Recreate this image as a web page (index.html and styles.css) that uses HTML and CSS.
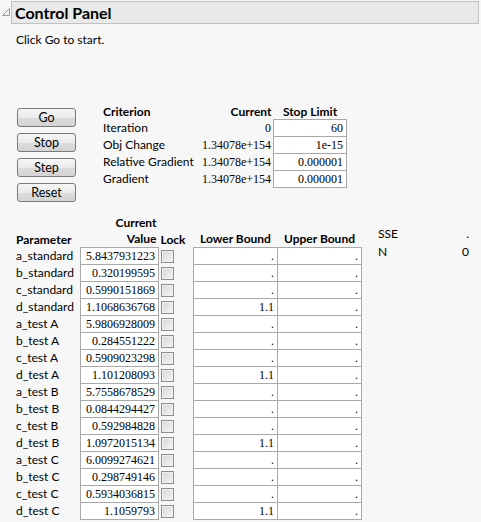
FILE: index.html
```html
<!DOCTYPE html>
<html>
<head>
<meta charset="utf-8">
<link rel="stylesheet" href="styles.css">
</head>
<body>
<div class="panel-head">
  <svg class="tri" width="10" height="10" viewBox="0 0 10 10"><path d="M8.5 1.5 L8.5 8.5 L1.5 8.5 Z" fill="#f4f4f4" stroke="#9a9a9a" stroke-width="1"/></svg>
  <div class="bar">Control Panel</div>
</div>
<div class="msg">Click Go to start.</div>

<div class="controls">
  <div class="buttons">
    <button class="btn">Go</button>
    <button class="btn">Stop</button>
    <button class="btn">Step</button>
    <button class="btn">Reset</button>
  </div>
  <table class="crit">
    <tr class="hrow"><th class="c-label">Criterion</th><th class="c-cur">Current</th><th class="c-stop">Stop Limit</th></tr>
    <tr><td class="c-label">Iteration</td><td class="c-cur num">0</td><td class="c-stop box num">60</td></tr>
    <tr><td class="c-label">Obj Change</td><td class="c-cur num">1.34078e+154</td><td class="c-stop box num">1e-15</td></tr>
    <tr><td class="c-label">Relative Gradient</td><td class="c-cur num">1.34078e+154</td><td class="c-stop box num">0.000001</td></tr>
    <tr><td class="c-label">Gradient</td><td class="c-cur num">1.34078e+154</td><td class="c-stop box num">0.000001</td></tr>
  </table>
</div>

<div class="params">
  <table class="ptab">
    <tr class="h1"><th></th><th class="p-val">Current</th><th></th><th></th><th></th></tr>
    <tr class="h2"><th class="p-name">Parameter</th><th class="p-val">Value</th><th class="p-lock">Lock</th><th class="p-bnd">Lower Bound</th><th class="p-bnd">Upper Bound</th></tr>
    <tr><td class="p-name">a_standard</td><td class="p-val box num">5.8437931223</td><td class="p-lock"><span class="chk"></span></td><td class="p-bnd box num">.</td><td class="p-bnd box num">.</td></tr>
    <tr><td class="p-name">b_standard</td><td class="p-val box num">0.320199595</td><td class="p-lock"><span class="chk"></span></td><td class="p-bnd box num">.</td><td class="p-bnd box num">.</td></tr>
    <tr><td class="p-name">c_standard</td><td class="p-val box num">0.5990151869</td><td class="p-lock"><span class="chk"></span></td><td class="p-bnd box num">.</td><td class="p-bnd box num">.</td></tr>
    <tr><td class="p-name">d_standard</td><td class="p-val box num">1.1068636768</td><td class="p-lock"><span class="chk"></span></td><td class="p-bnd box num">1.1</td><td class="p-bnd box num">.</td></tr>
    <tr><td class="p-name">a_test A</td><td class="p-val box num">5.9806928009</td><td class="p-lock"><span class="chk"></span></td><td class="p-bnd box num">.</td><td class="p-bnd box num">.</td></tr>
    <tr><td class="p-name">b_test A</td><td class="p-val box num">0.284551222</td><td class="p-lock"><span class="chk"></span></td><td class="p-bnd box num">.</td><td class="p-bnd box num">.</td></tr>
    <tr><td class="p-name">c_test A</td><td class="p-val box num">0.5909023298</td><td class="p-lock"><span class="chk"></span></td><td class="p-bnd box num">.</td><td class="p-bnd box num">.</td></tr>
    <tr><td class="p-name">d_test A</td><td class="p-val box num">1.101208093</td><td class="p-lock"><span class="chk"></span></td><td class="p-bnd box num">1.1</td><td class="p-bnd box num">.</td></tr>
    <tr><td class="p-name">a_test B</td><td class="p-val box num">5.7558678529</td><td class="p-lock"><span class="chk"></span></td><td class="p-bnd box num">.</td><td class="p-bnd box num">.</td></tr>
    <tr><td class="p-name">b_test B</td><td class="p-val box num">0.0844294427</td><td class="p-lock"><span class="chk"></span></td><td class="p-bnd box num">.</td><td class="p-bnd box num">.</td></tr>
    <tr><td class="p-name">c_test B</td><td class="p-val box num">0.592984828</td><td class="p-lock"><span class="chk"></span></td><td class="p-bnd box num">.</td><td class="p-bnd box num">.</td></tr>
    <tr><td class="p-name">d_test B</td><td class="p-val box num">1.0972015134</td><td class="p-lock"><span class="chk"></span></td><td class="p-bnd box num">1.1</td><td class="p-bnd box num">.</td></tr>
    <tr><td class="p-name">a_test C</td><td class="p-val box num">6.0099274621</td><td class="p-lock"><span class="chk"></span></td><td class="p-bnd box num">.</td><td class="p-bnd box num">.</td></tr>
    <tr><td class="p-name">b_test C</td><td class="p-val box num">0.298749146</td><td class="p-lock"><span class="chk"></span></td><td class="p-bnd box num">.</td><td class="p-bnd box num">.</td></tr>
    <tr><td class="p-name">c_test C</td><td class="p-val box num">0.5934036815</td><td class="p-lock"><span class="chk"></span></td><td class="p-bnd box num">.</td><td class="p-bnd box num">.</td></tr>
    <tr><td class="p-name">d_test C</td><td class="p-val box num">1.1059793</td><td class="p-lock"><span class="chk"></span></td><td class="p-bnd box num">1.1</td><td class="p-bnd box num">.</td></tr>
  </table>
  <div class="stats">
    <div class="s-label">SSE</div><div class="s-val">.</div>
    <div class="s-label">N</div><div class="s-val">0</div>
  </div>
</div>
</body>
</html>
```
FILE: styles.css
```css
html, body {
  margin: 0;
  padding: 0;
  background: #f7f7f7;
}
body {
  font-family: Lato, "Open Sans", sans-serif;
  font-size: 12px;
  color: #000;
  width: 481px;
  height: 522px;
  overflow: hidden;
}
.panel-head {
  display: flex;
  align-items: flex-start;
  padding-top: 1px;
}
.tri {
  margin: 6px 0 0 1px;
  flex: none;
}
.bar {
  flex: 1;
  margin-right: 2px;
  height: 21px;
  line-height: 21px;
  border: 1px solid #c2c2c2;
  background: #e9e9e9;
  font-weight: bold;
  font-size: 16px;
  padding-left: 3px;
}
.msg {
  margin: 8px 0 0 16px;
  line-height: 15px;
}
.controls {
  display: flex;
  align-items: flex-start;
  margin-top: 58px;
  padding-left: 17px;
}
.buttons {
  display: flex;
  flex-direction: column;
  gap: 6px;
  margin-top: 3px;
}
.btn {
  width: 59px;
  height: 19px;
  padding: 0;
  font-family: Lato, "Open Sans", sans-serif;
  font-size: 12.5px;
  color: #000;
  border: 1px solid #7a7a7a;
  border-radius: 3px;
  background: linear-gradient(#f6f6f6 0%, #ebebeb 50%, #dcdcdc 51%, #d4d4d4 100%);
}
.crit {
  border-collapse: collapse;
  margin-left: 27px;
}
.crit th, .crit td {
  padding: 0;
  height: 16px;
  line-height: 16px;
  white-space: nowrap;
}
.crit .hrow th {
  height: 14px;
  line-height: 14px;
  font-weight: bold;
}
.c-label {
  width: 93px;
  text-align: left;
}
.crit th.c-label { text-align: left; }
.c-cur {
  width: 75px;
  text-align: right;
  padding-right: 2px !important;
}
.c-stop {
  width: 69px;
  text-align: right;
}
.crit th.c-stop { text-align: center; }
.box {
  background: #fff;
  border: 1px solid #a9a9a9;
  padding-right: 3px !important;
}
.num {
  font-family: "Liberation Serif", "Times New Roman", serif;
  font-size: 12px;
}
.params {
  display: flex;
  align-items: flex-start;
  margin-top: 12px;
  padding-left: 16px;
}
.ptab {
  border-collapse: collapse;
}
.ptab th, .ptab td {
  padding: 0;
  height: 16px;
  line-height: 16px;
  white-space: nowrap;
}
.ptab th {
  font-weight: bold;
  vertical-align: bottom;
}
.ptab .h1 th { height: 17px; }
.p-name {
  width: 64px;
  text-align: left;
}
.p-val {
  width: 74px;
  text-align: right;
}
.ptab th.p-val { padding-right: 2px; }
.p-lock {
  width: 32px;
  text-align: left;
  padding-left: 2px !important;
}
.ptab td.p-lock { vertical-align: middle; }
.p-bnd {
  width: 80px;
  text-align: right;
}
.ptab th.p-bnd { text-align: center; }
.chk {
  display: block;
  width: 11px;
  height: 11px;
  border: 1px solid #8e8e8e;
  background: linear-gradient(135deg, #d8d8d8, #f4f4f4);
  box-shadow: inset 0 0 0 1px #f0f0f0;
}
.stats {
  display: grid;
  grid-template-columns: 60px 31px;
  row-gap: 2px;
  margin: 12px 0 0 16px;
  line-height: 16px;
}
.s-val {
  text-align: right;
}
```
